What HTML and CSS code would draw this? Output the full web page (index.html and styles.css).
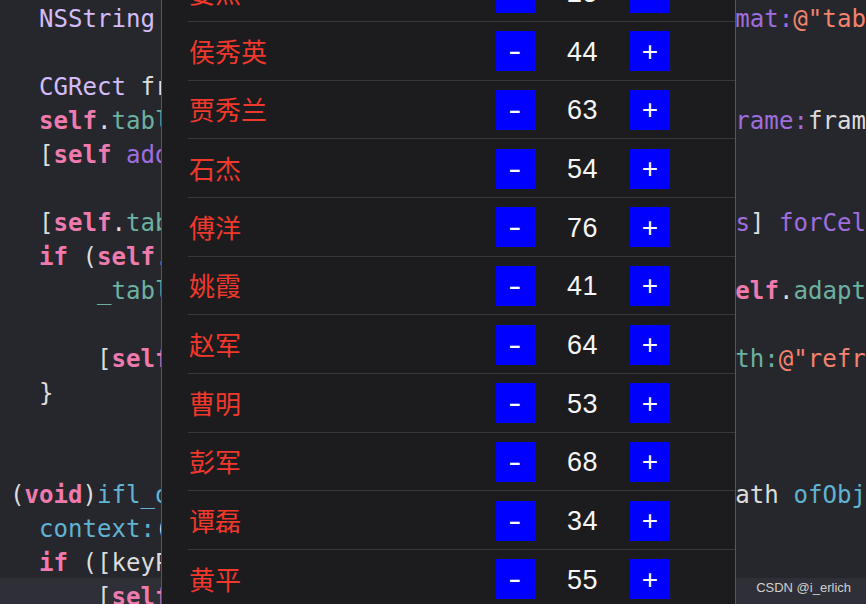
FILE: index.html
```html
<!DOCTYPE html>
<html lang="zh-CN">
<head>
<meta charset="utf-8">
<title>Simulator over Xcode</title>
<link rel="stylesheet" href="styles.css">
</head>
<body>
<div class="screen">
  <div class="editor">
    <div class="code">
<div class="ln">    <span class="ty">NSString</span> *cellReuseKey = [<span class="ty">NSString</span> <span class="fn">stringWithFormat:</span><span class="str">@"tableView_%@"</span>, <span class="fn">NSStringFromClass</span>(<span class="kw">self</span>.<span class="fn">class</span>)];</div>
<div class="ln"> </div>
<div class="ln">    <span class="ty">CGRect</span> frame = <span class="kw">self</span>.<span class="pr">view</span>.<span class="pr">bounds</span>;</div>
<div class="ln">    <span class="kw">self</span>.<span class="pr">tableView</span> = [[<span class="ty">IFLTableView</span> <span class="fn">alloc</span>] <span class="fn">initWithFrame:</span>frame <span class="fn">style:</span>UITableViewStylePlain];</div>
<div class="ln">    [<span class="kw">self</span> <span class="fn">addSubview:</span><span class="kw">self</span>.<span class="pr">tableView</span>];</div>
<div class="ln"> </div>
<div class="ln">    [<span class="kw">self</span>.<span class="pr">tableView</span> <span class="fn">registerClass:</span>[<span class="ty">IFLTableCell</span> <span class="fn">class</span>] <span class="fn">forCellReuseIdentifier:</span>cellReuseKey];</div>
<div class="ln">    <span class="kw">if</span> (<span class="kw">self</span>.<span class="pr">adaptiveHeight</span>) {</div>
<div class="ln">        <span class="pr">_tableView</span>.<span class="pr">estimatedRowHeight</span> = <span class="fn">MAX</span>(<span class="num">44.0f</span>, <span class="kw">self</span>.<span class="pr">adaptiveHeight</span>);</div>
<div class="ln"> </div>
<div class="ln">        [<span class="kw">self</span> <span class="pr">ifl_addObserverForValueChangeWithKeyPath:</span><span class="str">@"refreshHeight"</span>];</div>
<div class="ln">    }</div>
<div class="ln">}</div>
<div class="ln"> </div>
<div class="ln">- (<span class="kw">void</span>)<span class="pj">ifl_observeValuesForKeyPath:</span>(<span class="ty">NSString</span> *)keyPath <span class="pj">ofObject:</span>(<span class="kw">id</span>)object</div>
<div class="ln">    <span class="pj">context:</span>(<span class="kw">void</span> *)context {</div>
<div class="ln">    <span class="kw">if</span> ([keyPath <span class="fn">isEqualToString:</span><span class="str">@"height"</span>]) {</div>
<div class="ln cur">        [<span class="kw">self</span>.<span class="pr">tableView</span> <span class="fn">reloadData</span>];</div>
    </div>
  </div>

  <div class="sim">
    <div class="table">
      <div class="row"><span class="name">姜杰</span><span class="btn"><span class="minus">-</span></span><span class="count">25</span><span class="btn"><span class="plus">+</span></span></div>
      <div class="row"><span class="name">侯秀英</span><span class="btn"><span class="minus">-</span></span><span class="count">44</span><span class="btn"><span class="plus">+</span></span></div>
      <div class="row"><span class="name">贾秀兰</span><span class="btn"><span class="minus">-</span></span><span class="count">63</span><span class="btn"><span class="plus">+</span></span></div>
      <div class="row"><span class="name">石杰</span><span class="btn"><span class="minus">-</span></span><span class="count">54</span><span class="btn"><span class="plus">+</span></span></div>
      <div class="row"><span class="name">傅洋</span><span class="btn"><span class="minus">-</span></span><span class="count">76</span><span class="btn"><span class="plus">+</span></span></div>
      <div class="row"><span class="name">姚霞</span><span class="btn"><span class="minus">-</span></span><span class="count">41</span><span class="btn"><span class="plus">+</span></span></div>
      <div class="row"><span class="name">赵军</span><span class="btn"><span class="minus">-</span></span><span class="count">64</span><span class="btn"><span class="plus">+</span></span></div>
      <div class="row"><span class="name">曹明</span><span class="btn"><span class="minus">-</span></span><span class="count">53</span><span class="btn"><span class="plus">+</span></span></div>
      <div class="row"><span class="name">彭军</span><span class="btn"><span class="minus">-</span></span><span class="count">68</span><span class="btn"><span class="plus">+</span></span></div>
      <div class="row"><span class="name">谭磊</span><span class="btn"><span class="minus">-</span></span><span class="count">34</span><span class="btn"><span class="plus">+</span></span></div>
      <div class="row"><span class="name">黄平</span><span class="btn"><span class="minus">-</span></span><span class="count">55</span><span class="btn"><span class="plus">+</span></span></div>
    </div>
  </div>

  <div class="watermark">CSDN @i_erlich</div>
</div>
</body>
</html>
```
FILE: styles.css
```css
html, body {
  margin: 0;
  padding: 0;
  background: #26272c;
}

.screen {
  position: relative;
  width: 866px;
  height: 604px;
  overflow: hidden;
  background: #26272c;
}

.editor {
  height: 100%;
  overflow: hidden;
}

.code {
  margin-left: -19px;
  padding-top: 2px;
  font-family: "DejaVu Sans Mono", "Liberation Mono", monospace;
  font-size: 24.1px;
  line-height: 34px;
  color: #dcdcdc;
}

.ln {
  white-space: pre;
  height: 34px;
}

.ln.cur {
  background: #2f3037;
  box-shadow: 0 -2px 0 #2f3037;
}

.kw { color: #ef7aae; font-weight: bold; }
.ty { color: #d3bcf8; }
.fn { color: #a06ddf; }
.pr { color: #6cb1a0; }
.pj { color: #60b3d1; }
.str { color: #f3836c; }
.num { color: #d9c97c; }

.sim {
  position: absolute;
  top: 0;
  left: 161px;
  width: 573px;
  height: 604px;
  background: #1c1c1e;
  border-left: 1px solid #56565b;
  border-right: 1px solid #56565b;
  overflow: hidden;
}

.table {
  margin-top: -37.67px;
  display: flex;
  flex-direction: column;
}

.row {
  box-sizing: border-box;
  height: 58.67px;
  margin-left: 26px;
  padding-right: 65px;
  border-top: 1px solid #38383a;
  display: flex;
  align-items: center;
}

.name {
  flex: 1;
  padding-left: 1px;
  font-family: "Noto Sans CJK SC", "Noto Sans", sans-serif;
  font-size: 26px;
  line-height: 1;
  color: #f0382c;
}

.btn {
  width: 40px;
  height: 40px;
  margin-top: 1px;
  background: #0000ff;
  color: #ffffff;
  font-family: "Liberation Sans", Arial, sans-serif;
  font-size: 28px;
  line-height: 1;
  display: flex;
  align-items: center;
  justify-content: center;
}

.minus {
  display: inline-block;
  transform: scaleX(1.4);
}

.plus {
  display: inline-block;
  padding-top: 1px;
}

.count {
  width: 95px;
  padding-top: 3px;
  text-align: center;
  font-family: "Liberation Sans", Arial, sans-serif;
  font-size: 27px;
  letter-spacing: 0.5px;
  color: #f5f5f5;
}

.watermark {
  position: absolute;
  right: 15px;
  bottom: 9px;
  font-family: "Liberation Sans", Arial, sans-serif;
  font-size: 13px;
  color: #cfcfcf;
}
```
